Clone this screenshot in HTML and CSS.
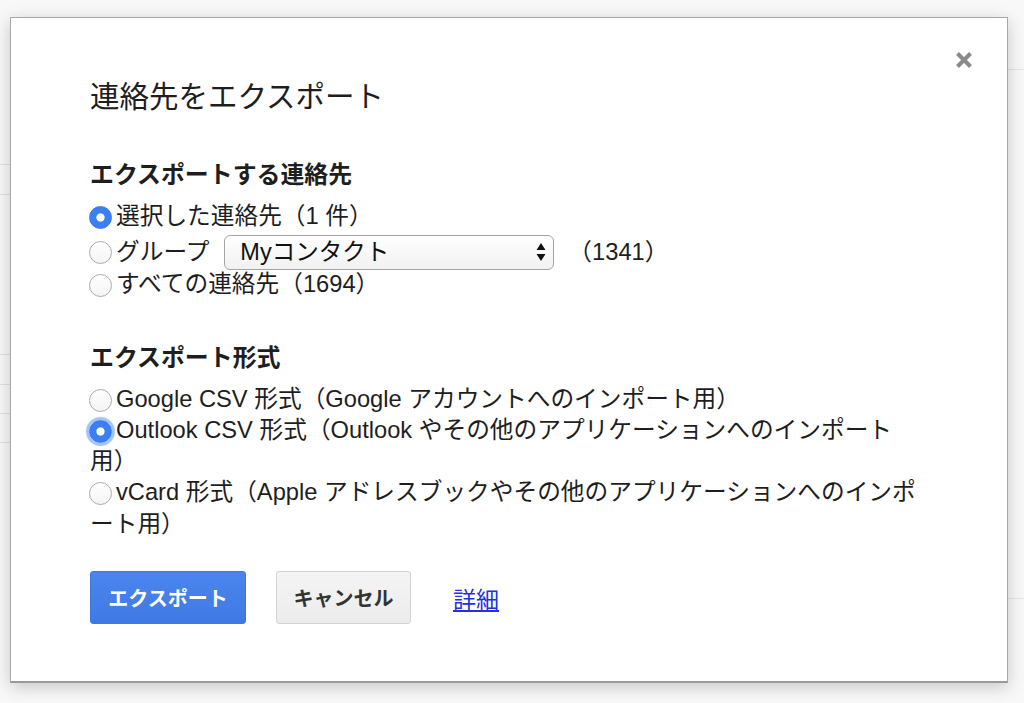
FILE: index.html
```html
<!DOCTYPE html>
<html lang="ja">
<head>
<meta charset="utf-8">
<title>連絡先をエクスポート</title>
<link rel="stylesheet" href="styles.css">
</head>
<body>
<div class="dialog" role="dialog" aria-labelledby="dlg-title">
  <button class="close" type="button" aria-label="閉じる">
    <svg viewBox="0 0 18 18" width="18" height="18" aria-hidden="true"><path d="M2.5 2.5L15.5 15.5M15.5 2.5L2.5 15.5" stroke="#8a8a8a" stroke-width="4" stroke-linecap="butt" fill="none"/></svg>
  </button>
  <h1 class="title" id="dlg-title">連絡先をエクスポート</h1>

  <section class="section">
    <h2 class="heading">エクスポートする連絡先</h2>
    <div class="options">
      <label class="option"><input type="radio" name="which" class="radio" checked>選択した連絡先（1 件）</label>
      <label class="option option-group"><input type="radio" name="which" class="radio">グループ<span class="select"><span class="select-text">Myコンタクト</span><svg class="select-arrows" viewBox="0 0 10 22" width="10" height="22" aria-hidden="true"><path d="M5 2L9.5 9H0.5Z M5 20L9.5 13H0.5Z" fill="#111"/></svg></span><span class="count">（1341）</span></label>
      <label class="option"><input type="radio" name="which" class="radio">すべての連絡先（1694）</label>
    </div>
  </section>

  <section class="section section-format">
    <h2 class="heading">エクスポート形式</h2>
    <div class="options">
      <label class="option"><input type="radio" name="fmt" class="radio">Google CSV 形式（Google アカウントへのインポート用）</label>
      <label class="option"><input type="radio" name="fmt" class="radio radio-focus" checked>Outlook CSV 形式（Outlook やその他のアプリケーションへのインポート用）</label>
      <label class="option"><input type="radio" name="fmt" class="radio">vCard 形式（Apple アドレスブックやその他のアプリケーションへのインポート用）</label>
    </div>
  </section>

  <div class="actions">
    <button type="button" class="btn btn-primary">エクスポート</button>
    <button type="button" class="btn btn-default">キャンセル</button>
    <a href="#" class="link">詳細</a>
  </div>
</div>
</body>
</html>
```
FILE: styles.css
```css
html, body {
  margin: 0;
  padding: 0;
}

body {
  width: 1024px;
  height: 703px;
  overflow: hidden;
  font-family: "Liberation Sans", "Noto Sans CJK JP", sans-serif;
  color: #1e1e1e;
  background-color: #f8f8f8;
  background-image:
    linear-gradient(#e2e2e2, #e2e2e2),
    linear-gradient(#e2e2e2, #e2e2e2),
    linear-gradient(#e2e2e2, #e2e2e2),
    linear-gradient(#e2e2e2, #e2e2e2),
    linear-gradient(#e2e2e2, #e2e2e2),
    linear-gradient(#e2e2e2, #e2e2e2),
    linear-gradient(#e6e6e6, #e6e6e6),
    linear-gradient(#e6e6e6, #e6e6e6);
  background-repeat: no-repeat;
  background-size: 10px 1px, 10px 1px, 10px 1px, 10px 1px, 10px 1px, 10px 1px, 16px 1px, 16px 1px;
  background-position:
    0 164px, 0 194px, 0 354px, 0 384px, 0 413px, 0 442px,
    1008px 69px, 1008px 598px;
  box-sizing: border-box;
  padding: 17px 0 0 10px;
}

.dialog {
  position: relative;
  width: 998px;
  box-sizing: border-box;
  background: #fff;
  border: 1px solid #a8a8a8;
  border-bottom: 2px solid #9a9a9a;
  box-shadow: 0 4px 16px rgba(0, 0, 0, 0.2);
  padding: 61px 82px 57px 79px;
}

.close {
  position: absolute;
  top: 33px;
  right: 34px;
  width: 18px;
  height: 18px;
  padding: 0;
  border: 0;
  background: none;
  cursor: pointer;
  filter: blur(0.6px);
}

.close svg {
  display: block;
}

.title {
  margin: 0;
  font-size: 29.5px;
  line-height: 36px;
  font-weight: 400;
  color: #1e1e1e;
}

.section {
  margin-top: 44px;
}

.section-format {
  margin-top: 41px;
}

.heading {
  margin: 0 0 11px;
  font-size: 23.9px;
  line-height: 31px;
  font-weight: 700;
  color: #1e1e1e;
}

.options {
  display: flex;
  flex-direction: column;
}

.option {
  display: block;
  font-size: 23.7px;
  line-height: 31.3px;
  color: #1e1e1e;
}

.option-group {
  display: flex;
  align-items: center;
  box-sizing: border-box;
  height: 37px;
  padding-top: 3px;
  white-space: nowrap;
}

.radio {
  appearance: none;
  -webkit-appearance: none;
  display: inline-block;
  box-sizing: border-box;
  width: 23px;
  height: 23px;
  margin: 0 4px 0 -1px;
  vertical-align: -5px;
  border-radius: 50%;
  border: 1px solid #ababab;
  background: linear-gradient(#ffffff, #f4f4f4);
  flex: none;
}

.radio:checked {
  border-color: #3a78e6;
  background: radial-gradient(circle, #ffffff 0 3.6px, #3b80f3 4.6px);
}

.radio-focus {
  box-shadow: 0 0 1px 3px rgba(88, 145, 240, 0.55);
}

.select {
  display: inline-flex;
  align-items: center;
  justify-content: space-between;
  box-sizing: border-box;
  width: 330px;
  height: 35px;
  margin-left: 15px;
  padding: 0 7px 0 15px;
  border: 1px solid #a4a4a4;
  border-radius: 6px;
  background: linear-gradient(#ffffff, #f1f1f1);
  font-size: 23.5px;
  color: #111;
}

.select-text {
  line-height: 33px;
}

.select-arrows {
  display: block;
}

.count {
  margin-left: 14px;
}

.actions {
  display: flex;
  align-items: center;
  margin-top: 31px;
}

.btn {
  box-sizing: border-box;
  height: 53px;
  border-radius: 3px;
  font-family: "Liberation Sans", "Noto Sans CJK JP", sans-serif;
  font-size: 20px;
  font-weight: 700;
  cursor: pointer;
}

.btn-primary {
  width: 156px;
  padding: 0;
  border: 1px solid #3b78e0;
  background: linear-gradient(#4a86ef, #4079e3);
  color: #fff;
}

.btn-default {
  width: 135px;
  padding: 0;
  margin-left: 30px;
  border: 1px solid #d3d3d3;
  background: linear-gradient(#f4f4f4, #ececec);
  color: #333;
}

.link {
  margin-left: 42px;
  font-size: 23px;
  color: #2430e0;
  text-decoration: underline;
}
```
